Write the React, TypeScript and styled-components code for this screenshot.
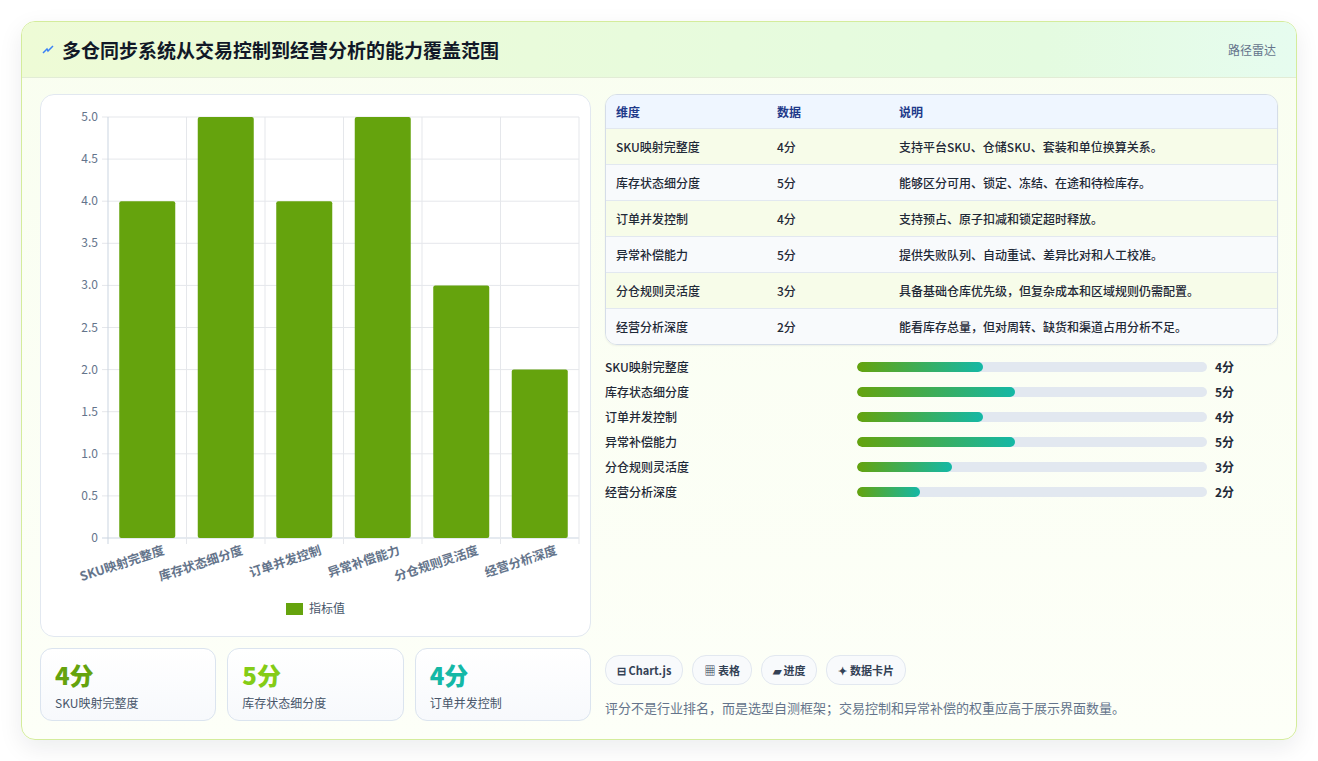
import React from 'react';
import styled, { createGlobalStyle } from 'styled-components';

const GlobalStyle = createGlobalStyle`
  html, body { margin: 0; padding: 0; background: #fff; }
  body { font-family: "Noto Sans CJK SC", "Noto Sans", sans-serif; color: #1f2937; }
`;

const rows = [
  { name: 'SKU映射完整度', v: 4, desc: '支持平台SKU、仓储SKU、套装和单位换算关系。' },
  { name: '库存状态细分度', v: 5, desc: '能够区分可用、锁定、冻结、在途和待检库存。' },
  { name: '订单并发控制', v: 4, desc: '支持预占、原子扣减和锁定超时释放。' },
  { name: '异常补偿能力', v: 5, desc: '提供失败队列、自动重试、差异比对和人工校准。' },
  { name: '分仓规则灵活度', v: 3, desc: '具备基础仓库优先级，但复杂成本和区域规则仍需配置。' },
  { name: '经营分析深度', v: 2, desc: '能看库存总量，但对周转、缺货和渠道占用分析不足。' },
];

const Page = styled.div`
  padding: 21px 21px 22px 21px;
`;

const Card = styled.div`
  border: 1px solid #d4ec9c;
  border-radius: 14px;
  background: linear-gradient(180deg, #f9fef0 0%, #fdfff8 100%);
  box-shadow: 0 8px 24px rgba(15, 23, 42, 0.08);
  overflow: hidden;
`;

const Header = styled.div`
  height: 55px;
  display: flex;
  align-items: center;
  justify-content: space-between;
  padding: 0 20px;
  background: linear-gradient(90deg, #eefbd6 0%, #e4fbe0 80%, #e6fcef 100%);
  border-bottom: 1px solid #e2ecd6;
`;

const Title = styled.h1`
  margin: 0;
  font-size: 19px;
  font-weight: 700;
  color: #111827;
  display: flex;
  align-items: center;
  gap: 8px;
`;

const Tag = styled.span`
  font-size: 12px;
  color: #64748b;
`;

const Body = styled.div`
  display: grid;
  grid-template-columns: 551px 1fr;
  gap: 14px;
  padding: 16px 18px 18px 18px;
`;

const Col = styled.div`
  display: flex;
  flex-direction: column;
`;

const ChartCard = styled.div`
  height: 543px;
  background: #fff;
  border: 1px solid #e2e8f0;
  border-radius: 14px;
  box-sizing: border-box;
`;

const Stats = styled.div`
  display: grid;
  grid-template-columns: repeat(3, 1fr);
  gap: 11px;
  margin-top: 11px;
`;

const Stat = styled.div`
  height: 73px;
  box-sizing: border-box;
  border: 1px solid #dbe4ef;
  border-radius: 12px;
  background: linear-gradient(180deg, #fff 0%, #f7f9fc 100%);
  padding: 11px 14px;
`;

const StatNum = styled.div<{ $c: string }>`
  font-size: 24px;
  font-weight: 800;
  line-height: 30px;
  color: ${p => p.$c};
`;

const StatLabel = styled.div`
  font-size: 12px;
  color: #475569;
  margin-top: 4px;
`;

const Table = styled.div`
  border: 1px solid #d5dde8;
  border-radius: 12px;
  overflow: hidden;
  box-shadow: 0 1px 2px rgba(15,23,42,0.06);
`;

const Row = styled.div<{ $bg: string; $h?: number }>`
  display: grid;
  grid-template-columns: 161px 122px 1fr;
  align-items: center;
  height: ${p => p.$h ?? 35}px;
  padding-left: 10px;
  font-size: 12px;
  background: ${p => p.$bg};
  border-top: 1px solid #e2e8f0;
  &:first-child { border-top: none; }
`;

const Th = styled.div`
  color: #1e3a8a;
  font-weight: 600;
`;

const Td = styled.div`
  color: #1f2937;
  font-weight: 500;
`;

const Bars = styled.div`
  display: flex;
  flex-direction: column;
  gap: 11px;
  margin-top: 13px;
`;

const BarRow = styled.div`
  display: grid;
  grid-template-columns: 252px 350px 1fr;
  align-items: center;
  gap: 0;
  font-size: 12px;
  height: 14px;
`;

const Track = styled.div`
  height: 10px;
  background: #e2e8f0;
  border-radius: 5px;
  overflow: hidden;
`;

const Fill = styled.div`
  height: 100%;
  border-radius: 5px;
  background: linear-gradient(90deg, #65a30d, #14b8a6);
`;

const BarVal = styled.span`
  padding-left: 8px;
  font-weight: 700;
  color: #1f2937;
`;

const Spacer = styled.div`
  flex: 1;
`;

const Chips = styled.div`
  display: flex;
  gap: 9px;
`;

const Chip = styled.span`
  height: 28px;
  padding: 0 11px;
  display: inline-flex;
  align-items: center;
  gap: 4px;
  border: 1px solid #e2e8f0;
  border-radius: 14px;
  background: #f8fafc;
  font-size: 11px;
  font-weight: 600;
  color: #334155;
`;

const Note = styled.p`
  margin: 13px 0 4px 0;
  font-size: 13px;
  color: #64748b;
`;

function Chart() {
  const x0 = 67, x1 = 538, yTop = 22, yBot = 443;
  const h = yBot - yTop;
  const cw = (x1 - x0) / 6;
  const ticks = [0, 0.5, 1, 1.5, 2, 2.5, 3, 3.5, 4, 4.5, 5];
  return (
    <svg width="549" height="541" style={{ display: 'block' }} fontFamily='"Noto Sans CJK SC", sans-serif'>
      {ticks.map(t => {
        const y = yBot - (t / 5) * h;
        return (
          <g key={t}>
            <line x1={x0 - 6} x2={x1} y1={y} y2={y} stroke={t === 0 ? '#cbd5e1' : '#e5e7eb'} />
            <text x={x0 - 10} y={y + 4} fontSize="12" fill="#64748b" textAnchor="end">{t === 0 ? '0' : t.toFixed(1)}</text>
          </g>
        );
      })}
      {Array.from({ length: 7 }).map((_, i) => (
        <line key={i} x1={x0 + i * cw} x2={x0 + i * cw} y1={yTop} y2={yBot + 6} stroke={i === 0 ? '#cbd5e1' : '#e5e7eb'} />
      ))}
      {rows.map((r, i) => {
        const bh = (r.v / 5) * h;
        const cx = x0 + i * cw + cw / 2;
        return (
          <g key={r.name}>
            <rect x={cx - 28} y={yBot - bh} width={56} height={bh} rx={2} fill="#65a30d" />
            <text transform={`translate(${cx + 18},${yBot + 16}) rotate(-18)`} fontSize="12.5" fontWeight="600" fill="#64748b" textAnchor="end">{r.name}</text>
          </g>
        );
      })}
      <rect x={245} y={508} width={17} height={12} fill="#65a30d" />
      <text x={268} y={518} fontSize="12" fill="#475569">指标值</text>
    </svg>
  );
}

export default function App() {
  return (
    <Page>
      <GlobalStyle />
      <Card>
        <Header>
          <Title>
            <svg width="12" height="12" viewBox="0 0 12 12"><path d="M1 9 L5 5 L6 7 L11 2" stroke="#3b82f6" strokeWidth="1.5" fill="none" /></svg>
            多仓同步系统从交易控制到经营分析的能力覆盖范围
          </Title>
          <Tag>路径雷达</Tag>
        </Header>
        <Body>
          <Col>
            <ChartCard><Chart /></ChartCard>
            <Stats>
              <Stat><StatNum $c="#65a30d">4分</StatNum><StatLabel>SKU映射完整度</StatLabel></Stat>
              <Stat><StatNum $c="#84cc16">5分</StatNum><StatLabel>库存状态细分度</StatLabel></Stat>
              <Stat><StatNum $c="#14b8a6">4分</StatNum><StatLabel>订单并发控制</StatLabel></Stat>
            </Stats>
          </Col>
          <Col>
            <Table>
              <Row $bg="#eff6ff" $h={33}><Th>维度</Th><Th>数据</Th><Th>说明</Th></Row>
              {rows.map((r, i) => (
                <Row key={r.name} $bg={i % 2 === 0 ? '#f7fce9' : '#f8fafc'}>
                  <Td>{r.name}</Td><Td>{r.v}分</Td><Td>{r.desc}</Td>
                </Row>
              ))}
            </Table>
            <Bars>
              {rows.map(r => (
                <BarRow key={r.name}>
                  <span style={{ fontWeight: 500 }}>{r.name}</span>
                  <Track><Fill style={{ width: `${r.v * 9}%` }} /></Track>
                  <BarVal>{r.v}分</BarVal>
                </BarRow>
              ))}
            </Bars>
            <Spacer />
            <Chips>
              <Chip>⊟ Chart.js</Chip>
              <Chip>▦ 表格</Chip>
              <Chip>▰ 进度</Chip>
              <Chip>✦ 数据卡片</Chip>
            </Chips>
            <Note>评分不是行业排名，而是选型自测框架；交易控制和异常补偿的权重应高于展示界面数量。</Note>
          </Col>
        </Body>
      </Card>
    </Page>
  );
}
